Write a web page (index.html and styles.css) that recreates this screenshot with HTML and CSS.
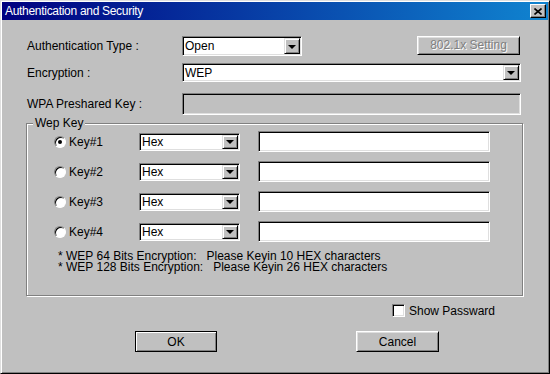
FILE: index.html
```html
<!DOCTYPE html>
<html lang="en">
<head>
    <meta charset="UTF-8">
    <title>Authentication and Security</title>
    <link rel="stylesheet" href="styles.css">
</head>
<body>
    <div class="window">
        <div class="titlebar">
            <span class="title">Authentication and Security</span>
            <span class="close">
                <svg width="8" height="7" viewBox="0 0 8 7">
                    <path d="M0.5 0.5 L7.5 6.5 M7.5 0.5 L0.5 6.5" stroke="#000" stroke-width="1.6"/>
                </svg>
            </span>
        </div>

        <div class="content">
            <div class="row row-auth">
                <span class="label">Authentication Type :</span>
                <div class="combo combo-auth"><span class="combo-text">Open</span><span class="combo-btn"></span></div>
                <div class="btn btn-disabled btn-8021x">802.1x Setting</div>
            </div>

            <div class="row row-enc">
                <span class="label">Encryption :</span>
                <div class="combo combo-wide"><span class="combo-text">WEP</span><span class="combo-btn"></span></div>
            </div>

            <div class="row row-wpa">
                <span class="label">WPA Preshared Key :</span>
                <div class="field field-disabled"></div>
            </div>

            <div class="group">
                <span class="legend">Wep Key</span>
                <div class="key-list">
                    <div class="key-row">
                        <div class="radio-wrap"><span class="radio checked"></span><span>Key#1</span></div>
                        <div class="combo combo-key"><span class="combo-text">Hex</span><span class="combo-btn"></span></div>
                        <div class="field"></div>
                    </div>
                    <div class="key-row">
                        <div class="radio-wrap"><span class="radio"></span><span>Key#2</span></div>
                        <div class="combo combo-key"><span class="combo-text">Hex</span><span class="combo-btn"></span></div>
                        <div class="field"></div>
                    </div>
                    <div class="key-row">
                        <div class="radio-wrap"><span class="radio"></span><span>Key#3</span></div>
                        <div class="combo combo-key"><span class="combo-text">Hex</span><span class="combo-btn"></span></div>
                        <div class="field"></div>
                    </div>
                    <div class="key-row">
                        <div class="radio-wrap"><span class="radio"></span><span>Key#4</span></div>
                        <div class="combo combo-key"><span class="combo-text">Hex</span><span class="combo-btn"></span></div>
                        <div class="field"></div>
                    </div>
                </div>
                <div class="notes">* WEP 64 Bits Encryption:   Please Keyin 10 HEX characters
* WEP 128 Bits Encryption:   Please Keyin 26 HEX characters</div>
            </div>

            <div class="row row-show">
                <span class="checkbox"></span>
                <span>Show Passward</span>
            </div>

            <div class="row row-buttons">
                <div class="btn btn-default btn-ok">OK</div>
                <div class="btn btn-cancel">Cancel</div>
            </div>
        </div>
    </div>
</body>
</html>
```

FILE: styles.css
```css
* {
    box-sizing: border-box;
}
body {
    margin: 0;
    font-family: "Liberation Sans", Arial, sans-serif;
    font-size: 12px;
    color: #000;
    background-color: #c0c0c0;
}
.window {
    width: 550px;
    height: 374px;
    padding: 1px;
    background-color: #c0c0c0;
    border: 1px solid;
    border-color: #dfdfdf #000 #000 #dfdfdf;
    box-shadow: inset 1px 1px #fff, inset -1px -1px #808080;
    display: flex;
    flex-direction: column;
}
.titlebar {
    height: 18px;
    padding: 0 2px 0 3px;
    display: flex;
    align-items: center;
    background: linear-gradient(to right, #000080, #1084d0);
    color: #fff;
}
.title {
    font-size: 12px;
    letter-spacing: -0.3px;
}
.close {
    margin-left: auto;
    width: 16px;
    height: 14px;
    display: flex;
    align-items: center;
    justify-content: center;
    background-color: #c0c0c0;
    border: 1px solid;
    border-color: #fff #000 #000 #fff;
    box-shadow: inset -1px -1px #808080;
}
.content {
    padding: 0 27px 0 25px;
    display: flex;
    flex-direction: column;
}
.row {
    display: flex;
    align-items: center;
}
.label {
    width: 155px;
}
.row-auth {
    margin-top: 16px;
    height: 20px;
}
.row-enc {
    margin-top: 7px;
    height: 19px;
}
.row-wpa {
    margin-top: 11px;
    height: 22px;
}

/* sunken controls */
.combo, .field {
    height: 100%;
    padding: 1px;
    background-color: #fff;
    border: 1px solid;
    border-color: #808080 #fff #fff #808080;
    box-shadow: inset 1px 1px #000, inset -1px -1px #dfdfdf;
}
.combo {
    display: flex;
    align-items: center;
}
.combo-text {
    flex: 1;
    padding-left: 1px;
}
.combo-btn {
    width: 16px;
    height: 100%;
    display: flex;
    align-items: center;
    justify-content: center;
    background-color: #c0c0c0;
    border: 1px solid;
    border-color: #dfdfdf #000 #000 #dfdfdf;
    box-shadow: inset 1px 1px #fff, inset -1px -1px #808080;
}
.combo-btn::after {
    content: "";
    border-left: 4px solid transparent;
    border-right: 4px solid transparent;
    border-top: 4px solid #000;
    margin-top: 1px;
}
.combo-auth {
    width: 120px;
}
.combo-wide, .row-wpa .field {
    flex: 1;
}
.field-disabled {
    background-color: #c0c0c0;
}

/* buttons */
.btn {
    display: flex;
    align-items: center;
    justify-content: center;
    background-color: #c0c0c0;
    border: 1px solid;
    border-color: #fff #000 #000 #fff;
    box-shadow: inset 1px 1px #dfdfdf, inset -1px -1px #808080;
}
.btn-default {
    border-color: #000;
    box-shadow: inset 1px 1px #fff, inset -1px -1px #808080;
}
.btn-disabled {
    color: #808080;
    text-shadow: 1px 1px #fff;
}
.btn-8021x {
    margin-left: auto;
    margin-right: 1px;
    margin-top: -2px;
    width: 103px;
    height: 19px;
}

/* wep key group */
.group {
    position: relative;
    margin-top: 8px;
    margin-left: -1px;
    width: 497px;
    height: 173px;
    padding: 7px 0 0 27px;
    border: 1px solid #808080;
    box-shadow: inset 1px 1px #fff, 1px 1px #fff;
}
.legend {
    position: absolute;
    top: -8px;
    left: 6px;
    padding: 0 2px;
    line-height: 14px;
    background-color: #c0c0c0;
}
.key-list {
    display: flex;
    flex-direction: column;
    gap: 9px;
}
.key-row {
    height: 21px;
    display: grid;
    grid-template-columns: 85px 101px 250px;
    align-items: center;
}
.key-row .combo {
    height: 18px;
}
.key-row .field {
    height: 21px;
    margin-left: 18px;
}
.radio-wrap {
    display: flex;
    align-items: center;
    gap: 3px;
}
.radio {
    width: 12px;
    height: 12px;
    display: flex;
    align-items: center;
    justify-content: center;
    border-radius: 50%;
    background-color: #fff;
    border: 1px solid;
    border-color: #808080 #fff #fff #808080;
    box-shadow: inset 1px 1px #000;
}
.radio.checked::after {
    content: "";
    width: 4px;
    height: 4px;
    border-radius: 50%;
    background-color: #000;
}
.notes {
    margin-top: 9px;
    margin-left: 4px;
    line-height: 11px;
    white-space: pre;
}

/* bottom */
.row-show {
    margin-top: 8px;
    height: 13px;
    padding-left: 365px;
    gap: 4px;
}
.checkbox {
    width: 13px;
    height: 13px;
    background-color: #fff;
    border: 1px solid;
    border-color: #808080 #fff #fff #808080;
    box-shadow: inset 1px 1px #000, inset -1px -1px #dfdfdf;
}
.row-buttons {
    margin-top: 14px;
}
.btn-ok {
    margin-left: 108px;
    width: 82px;
    height: 21px;
}
.btn-cancel {
    margin-left: 139px;
    width: 83px;
    height: 21px;
}
```
